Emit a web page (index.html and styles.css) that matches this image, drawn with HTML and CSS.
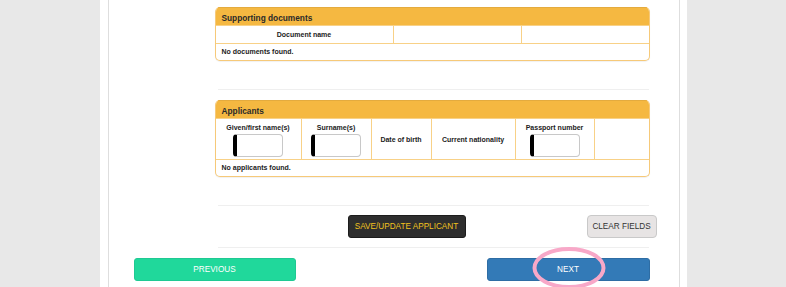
FILE: index.html
```html
<!DOCTYPE html>
<html>
<head>
<meta charset="utf-8">
<link rel="stylesheet" href="styles.css">
</head>
<body>
<div class="page">
  <div class="frame">
    <div class="content">
      <section class="panel">
        <div class="panel-head">Supporting documents</div>
        <div class="grid docs head-row">
          <div class="cell">Document name</div>
          <div class="cell"></div>
          <div class="cell last"></div>
        </div>
        <div class="empty">No documents found.</div>
      </section>

      <hr class="divider first">

      <section class="panel">
        <div class="panel-head">Applicants</div>
        <div class="grid apps head-row tall">
          <div class="cell stack"><span>Given/first name(s)</span><input class="field" type="text"></div>
          <div class="cell stack"><span>Surname(s)</span><input class="field" type="text"></div>
          <div class="cell">Date of birth</div>
          <div class="cell">Current nationality</div>
          <div class="cell stack"><span>Passport number</span><input class="field" type="text"></div>
          <div class="cell last"></div>
        </div>
        <div class="empty">No applicants found.</div>
      </section>

      <hr class="divider">

      <div class="actions">
        <button class="btn save">SAVE/UPDATE APPLICANT</button>
        <button class="btn clear">CLEAR FIELDS</button>
      </div>

      <hr class="divider tight">
    </div>

    <div class="nav">
      <button class="btn prev">PREVIOUS</button>
      <button class="btn next">NEXT
        <svg class="ring" width="80" height="48" viewBox="0 0 80 48"><ellipse cx="40" cy="22" rx="34.5" ry="19" fill="none" stroke="#f8a8c8" stroke-width="4"/></svg>
      </button>
    </div>
  </div>
</div>
</body>
</html>
```
FILE: styles.css
```css
* { box-sizing: border-box; }
html, body { margin: 0; padding: 0; }
body {
  background: #e8e8e8;
  font-family: "Liberation Sans", Arial, sans-serif;
  color: #222;
  height: 287px;
  overflow: hidden;
}
.page {
  width: 587px;
  margin: 0 auto;
  background: #fff;
  height: 287px;
  padding: 0 7px 0 8px;
}
.frame {
  height: 100%;
  border-left: 1px solid #dedede;
  border-right: 1px solid #dedede;
  padding-top: 7px;
}
.content {
  margin-left: 106px;
  width: 435px;
}
.panel {
  border: 1px solid #f6c979;
  border-top: 0;
  border-radius: 5px;
  overflow: hidden;
  box-shadow: 0 1px 1px rgba(0,0,0,0.06);
  background: #fff;
}
.panel-head {
  background: #f5b841;
  height: 19px;
  padding: 5px 0 0 6px;
  font-size: 8.3px;
  font-weight: bold;
  color: #2a2a2a;
  border-top: 1px solid #e4ab3e;
  border-bottom: 1px solid #f8d187;
}
.grid {
  display: grid;
  border-bottom: 1px solid #f8d187;
}
.docs { grid-template-columns: 178px 128px 1fr; height: 18px; }
.apps { grid-template-columns: 86px 70px 60px 84px 79px 1fr; height: 41px; }
.cell {
  border-right: 1px solid #f8d187;
  display: flex;
  align-items: center;
  justify-content: center;
  font-size: 7px;
  font-weight: bold;
  color: #222;
}
.cell.last { border-right: 0; }
.cell.stack {
  flex-direction: column;
  justify-content: flex-start;
  padding-top: 5px;
  gap: 3px;
}
.field {
  width: 50px;
  height: 23px;
  border: 1px solid #c8c8c8;
  border-left: 4px solid #000;
  border-radius: 4px;
  background: #fff;
  padding: 0;
  margin: 0;
  outline: none;
}
.empty {
  height: 16px;
  padding: 4px 0 0 6px;
  font-size: 7px;
  font-weight: bold;
  color: #222;
}
.divider {
  border: 0;
  border-top: 1px solid #efefef;
  margin: 28px 0 9px 3px;
  width: 431px;
  height: 0;
}
.divider.first { margin-top: 28px; margin-bottom: 10px; }
.divider.tight { margin-top: 9px; margin-bottom: 0; }
.actions {
  display: flex;
  align-items: center;
  margin-top: 0;
}
.btn {
  font-family: "Liberation Sans", Arial, sans-serif;
  font-size: 8.2px;
  font-weight: normal;
  height: 23px;
  border-radius: 3px;
  padding: 0;
  cursor: pointer;
  flex: none;
}
.save {
  margin-left: 133px;
  width: 118px;
  background: #2e2e2e;
  border: 1px solid #1c1c1c;
  color: #f1c31e;
}
.clear {
  margin-left: 121px;
  width: 70px;
  background: #e7e4e4;
  border: 1px solid #c9c9c9;
  color: #333;
  border-radius: 4px;
}
.nav {
  display: flex;
  margin-top: 10px;
  padding-left: 25px;
}
.prev {
  width: 162px;
  background: #20d89b;
  border: 1px solid #1fc993;
  color: #fff;
}
.next {
  position: relative;
  margin-left: 191px;
  width: 163px;
  background: #337ab7;
  border: 1px solid #2e6da4;
  color: #fff;
}
.ring {
  position: absolute;
  left: 41px;
  top: -13px;
  pointer-events: none;
}
```
